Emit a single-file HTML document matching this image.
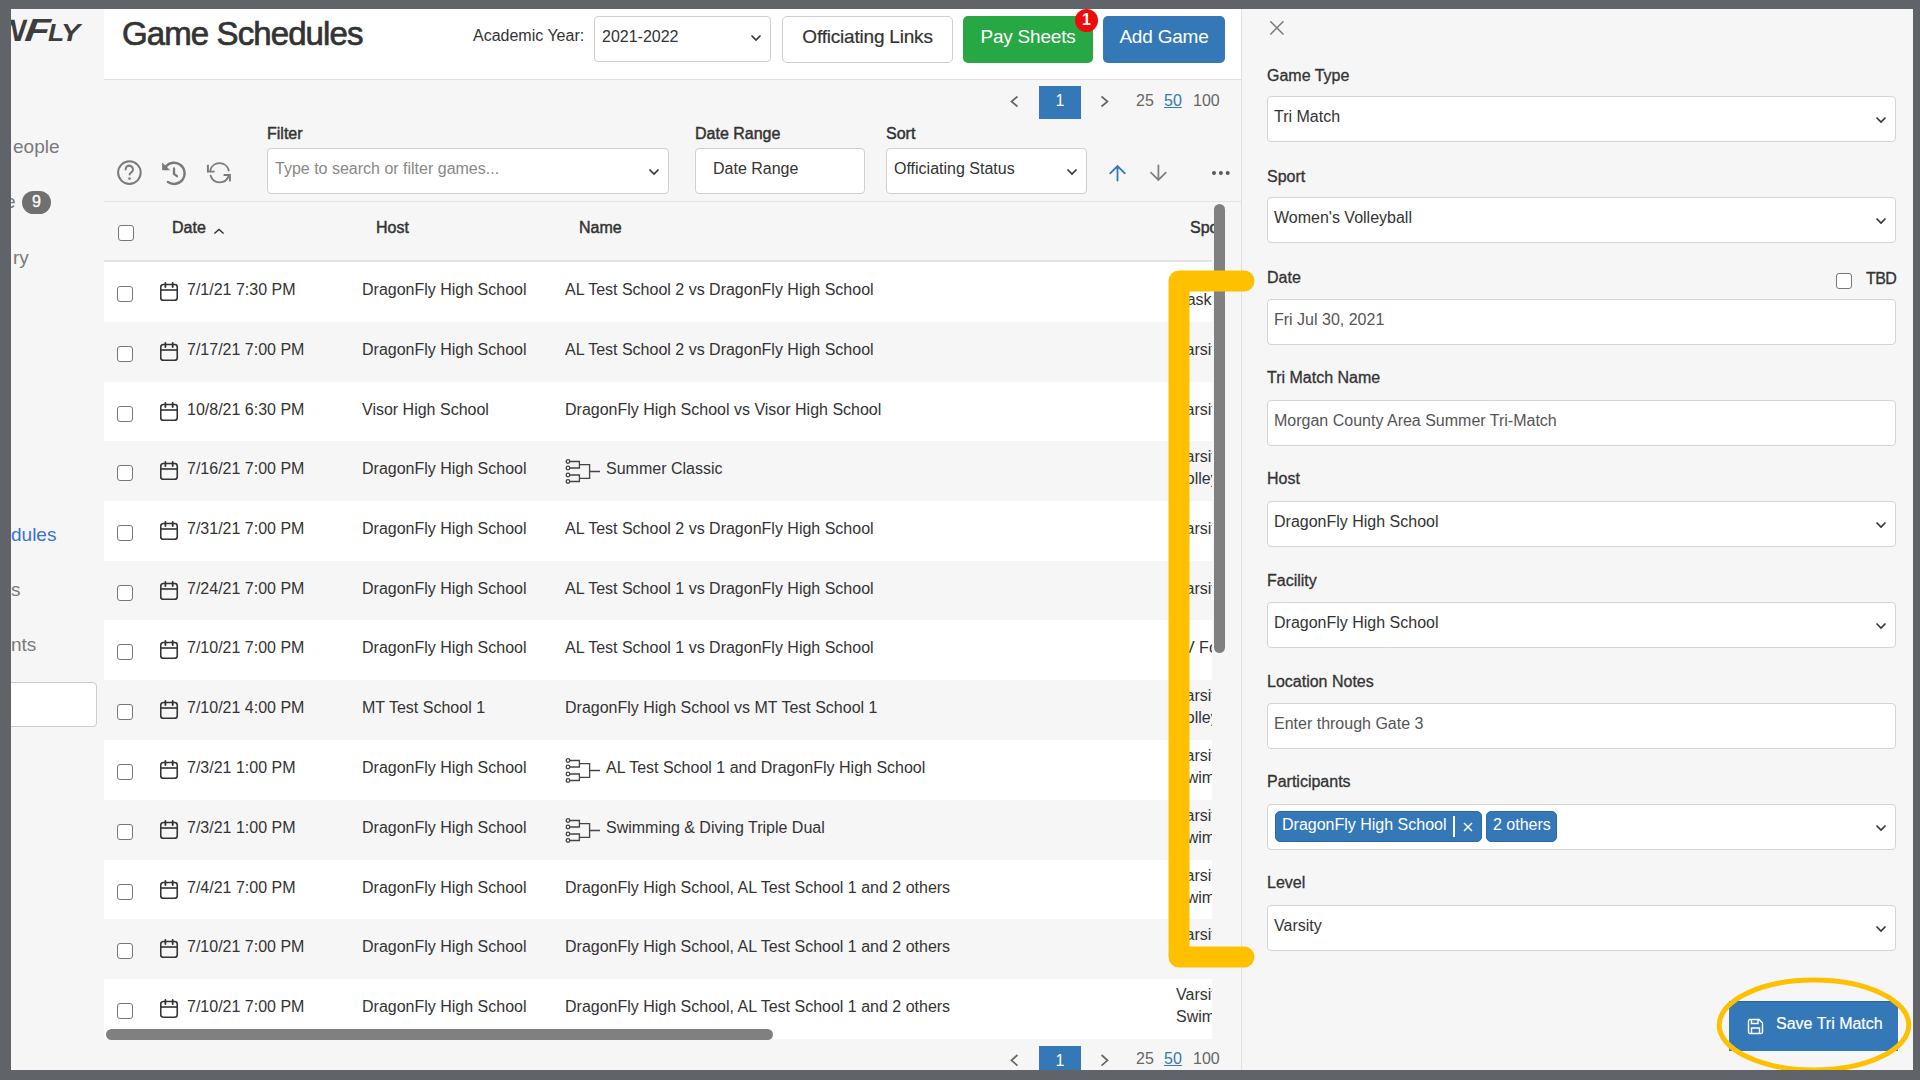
<!DOCTYPE html>
<html><head><meta charset="utf-8">
<style>
*{box-sizing:border-box;margin:0;padding:0}
html,body{width:1920px;height:1080px;overflow:hidden;background:#606469;font-family:"Liberation Sans",sans-serif;color:#333}
#app{position:absolute;left:11px;top:9px;width:1902px;height:1061px;background:#f6f6f6;overflow:hidden}
.abs{position:absolute}
.t{position:absolute;font-size:16px;line-height:20px;white-space:nowrap;color:#333}
/* sidebar */
#side{position:absolute;left:0;top:0;width:93px;height:1061px;background:#f6f6f6;overflow:hidden}
.sitem{position:absolute;font-size:19px;line-height:24px;color:#7a7a7a;white-space:nowrap}
/* header */
#hdr{position:absolute;left:93px;top:0;width:1137px;height:71px;background:#fff;border-bottom:1px solid #dedede}
#main{position:absolute;left:93px;top:71px;width:1137px;height:990px;background:#f6f6f6;overflow:hidden}
.btn{position:absolute;top:7px;height:47px;border-radius:5px;font-size:19px;letter-spacing:-0.2px;line-height:42px;text-align:center;white-space:nowrap}
.sel{position:absolute;background:#fff;border:1px solid #cfcfcf;border-radius:4px}
.flabel{position:absolute;font-size:16px;font-weight:normal;-webkit-text-stroke:0.45px #333;line-height:20px;color:#333;white-space:nowrap}
.row{position:absolute;left:0;width:1108px;overflow:hidden}
.cb{position:absolute;width:16px;height:16px;border:1.5px solid #777;border-radius:3px;background:#fff}
.sp{left:1072px}
/* right panel */
#rp{position:absolute;left:1230px;top:0;width:672px;height:1061px;background:#f6f6f6;border-left:1px solid #e0e0e0}
.lbl{position:absolute;left:25px;font-size:16px;line-height:22px;color:#333;white-space:nowrap;-webkit-text-stroke:0.3px #333}
.inp{position:absolute;left:25px;width:629px;height:46px;background:#fff;border:1px solid #d4d4d4;border-radius:4px}
.iv{position:absolute;left:6px;top:10px;font-size:16px;line-height:20px;color:#333;white-space:nowrap}
.chev{position:absolute;right:8px;top:19px;width:12px;height:8px;line-height:0}
.tag{position:absolute;top:6px;height:31px;background:#3578b8;border:1px solid #2c6aa6;border-radius:5px;color:#fff;font-size:16px;line-height:26px;padding-left:6px;white-space:nowrap;overflow:hidden}
.tag .bar{position:absolute;left:177px;top:4px;width:1.5px;height:21px;background:#fff}
.tag .x{position:absolute;left:187px;top:10px}
</style></head>
<body>
<div id="app">
  <!-- sidebar -->
  <div id="side">
    <div class="abs" style="left:0;top:0;width:93px;height:60px;overflow:hidden;font-weight:bold;font-style:italic;color:#3d3d3d;white-space:nowrap">
      <span class="abs" style="left:-8px;top:2px;font-size:31px;line-height:40px;transform:skewX(-8deg)">N</span>
      <span class="abs" style="left:17px;top:1px;font-size:32px;line-height:40px;transform:scaleX(1.25) skewX(-6deg);transform-origin:0 0">F</span>
      <span class="abs" style="left:37px;top:8px;font-size:24px;line-height:32px;transform:scaleX(1.1);transform-origin:0 0">L</span>
      <span class="abs" style="left:50px;top:8px;font-size:24px;line-height:32px;transform:scaleX(1.2);transform-origin:0 0">Y</span>
    </div>
    <div class="sitem" style="left:2px;top:126px">eople</div>
    <div class="sitem" style="left:-6px;top:181px">e</div>
    <div class="abs" style="left:11px;top:182px;width:29px;height:23px;border-radius:12px;background:#707070;color:#fff;font-size:16px;-webkit-text-stroke:0.3px #fff;line-height:21px;text-align:center">9</div>
    <div class="sitem" style="left:2px;top:237px">ry</div>
    <div class="sitem" style="left:0px;top:514px;color:#3b6fd6">dules</div>
    <div class="sitem" style="left:0px;top:569px">s</div>
    <div class="sitem" style="left:0px;top:624px">nts</div>
    <div class="abs" style="left:-10px;top:673px;width:96px;height:45px;background:#fff;border:1px solid #ccc;border-radius:4px"></div>
  </div>
  <!-- header -->
  <div id="hdr">
    <div class="abs" style="left:18px;top:5px;font-size:33px;line-height:40px;font-weight:normal;letter-spacing:-0.9px;-webkit-text-stroke:0.7px #333;color:#333;white-space:nowrap">Game Schedules</div>
    <div class="abs" style="left:369px;top:17px;font-size:16px;line-height:20px;color:#333;white-space:nowrap">Academic Year:</div>
    <div class="sel" style="left:490px;top:7px;width:177px;height:46px"><div class="t" style="left:7px;top:10px">2021-2022</div><div class="chev" style="top:17px;right:8px"><svg width="12" height="8" viewBox="0 0 12 8"><path d="M1.5 1.5 L6 6 L10.5 1.5" fill="none" stroke="#333" stroke-width="1.6"/></svg></div></div>
    <div class="btn" style="left:678px;width:171px;background:#fff;border:1px solid #cfcfcf;color:#333;line-height:40px;-webkit-text-stroke:0.2px #333">Officiating Links</div>
    <div class="btn" style="left:859px;width:130px;background:#28a745;color:#fff">Pay Sheets</div>
    <div class="abs" style="left:971px;top:0px;width:23px;height:23px;border-radius:50%;background:#f00a0a;color:#fff;font-size:16px;font-weight:bold;line-height:21px;text-align:center">1</div>
    <div class="btn" style="left:999px;width:122px;background:#3578b8;color:#fff">Add Game</div>
  </div>
  <!-- main -->
  <div id="main">
    <!-- pagination top -->
    
    <div class="abs" style="left:935px;top:6px;width:42px;height:33px;background:#3578b8;color:#fff;font-size:16px;line-height:30px;text-align:center">1</div>
    
    <div class="t" style="left:1032px;top:11px;color:#666">25</div>
    <div class="t" style="left:1060px;top:11px;color:#3578b8;text-decoration:underline">50</div>
    <div class="t" style="left:1089px;top:11px;color:#666">100</div>
    <!-- filter bar -->
    <div class="flabel" style="left:163px;top:44px">Filter</div>
    <div class="sel" style="left:163px;top:68px;width:402px;height:46px"><div class="t" style="left:7px;top:10px;color:#888">Type to search or filter games...</div><div class="chev"><svg width="12" height="8" viewBox="0 0 12 8"><path d="M1.5 1.5 L6 6 L10.5 1.5" fill="none" stroke="#333" stroke-width="1.6"/></svg></div></div>
    <div class="flabel" style="left:591px;top:44px">Date Range</div>
    <div class="sel" style="left:591px;top:68px;width:170px;height:46px"><div class="t" style="left:17px;top:10px">Date Range</div></div>
    <div class="flabel" style="left:782px;top:44px">Sort</div>
    <div class="sel" style="left:782px;top:68px;width:201px;height:46px"><div class="t" style="left:7px;top:10px">Officiating Status</div><div class="chev"><svg width="12" height="8" viewBox="0 0 12 8"><path d="M1.5 1.5 L6 6 L10.5 1.5" fill="none" stroke="#333" stroke-width="1.6"/></svg></div></div>
    <!-- separator -->
    <div class="abs" style="left:0;top:121px;width:1137px;height:1px;background:#e3e3e3"></div>
    <!-- table header -->
    <div class="cb" style="left:14px;top:145px"></div>
    <div class="flabel" style="left:68px;top:138px">Date</div>
    <svg class="abs" style="left:109px;top:147px" width="12" height="8" viewBox="0 0 12 8"><path d="M1.4 6.6 L6 2.4 L10.6 6.6" fill="none" stroke="#333" stroke-width="1.4"/></svg>
    <div class="flabel" style="left:272px;top:138px">Host</div>
    <div class="flabel" style="left:475px;top:138px">Name</div>
    <div class="flabel" style="left:1086px;top:138px">Spo</div>
    <div class="abs" style="left:0;top:180px;width:1108px;height:2px;background:#e3e3e3"></div>
  </div>
  <!-- rows are positioned relative to app -->
  <div id="rows" class="abs" style="left:93px;top:-9px;width:1108px;height:1041px;overflow:hidden">
<div class="row" style="top:262px;height:60px;background:#fff"><div class="cb" style="left:13px;top:24px"></div><div style="position:absolute;left:56px;top:20px"><svg width="19" height="20" viewBox="0 0 19 20"><rect x="0.75" y="2.55" width="16.5" height="15.75" rx="2.6" fill="none" stroke="#333" stroke-width="1.6"/><line x1="0.8" y1="8" x2="17.2" y2="8" stroke="#333" stroke-width="1.6"/><line x1="5.4" y1="0.9" x2="5.4" y2="5" stroke="#333" stroke-width="1.8" stroke-linecap="round"/><line x1="12.7" y1="0.9" x2="12.7" y2="5" stroke="#333" stroke-width="1.8" stroke-linecap="round"/></svg></div><div class="t" style="left:83px;top:18px">7/1/21 7:30 PM</div><div class="t" style="left:258px;top:18px">DragonFly High School</div><div class="t" style="left:461px;top:18px">AL Test School 2 vs DragonFly High School</div><div class="t sp" style="top:6px">Varsity</div><div class="t sp" style="top:28px">Basketball</div></div>
<div class="row" style="top:322px;height:60px;background:#f6f6f6"><div class="cb" style="left:13px;top:24px"></div><div style="position:absolute;left:56px;top:20px"><svg width="19" height="20" viewBox="0 0 19 20"><rect x="0.75" y="2.55" width="16.5" height="15.75" rx="2.6" fill="none" stroke="#333" stroke-width="1.6"/><line x1="0.8" y1="8" x2="17.2" y2="8" stroke="#333" stroke-width="1.6"/><line x1="5.4" y1="0.9" x2="5.4" y2="5" stroke="#333" stroke-width="1.8" stroke-linecap="round"/><line x1="12.7" y1="0.9" x2="12.7" y2="5" stroke="#333" stroke-width="1.8" stroke-linecap="round"/></svg></div><div class="t" style="left:83px;top:18px">7/17/21 7:00 PM</div><div class="t" style="left:258px;top:18px">DragonFly High School</div><div class="t" style="left:461px;top:18px">AL Test School 2 vs DragonFly High School</div><div class="t sp" style="top:18px">Varsity</div></div>
<div class="row" style="top:382px;height:59px;background:#fff"><div class="cb" style="left:13px;top:24px"></div><div style="position:absolute;left:56px;top:20px"><svg width="19" height="20" viewBox="0 0 19 20"><rect x="0.75" y="2.55" width="16.5" height="15.75" rx="2.6" fill="none" stroke="#333" stroke-width="1.6"/><line x1="0.8" y1="8" x2="17.2" y2="8" stroke="#333" stroke-width="1.6"/><line x1="5.4" y1="0.9" x2="5.4" y2="5" stroke="#333" stroke-width="1.8" stroke-linecap="round"/><line x1="12.7" y1="0.9" x2="12.7" y2="5" stroke="#333" stroke-width="1.8" stroke-linecap="round"/></svg></div><div class="t" style="left:83px;top:18px">10/8/21 6:30 PM</div><div class="t" style="left:258px;top:18px">Visor High School</div><div class="t" style="left:461px;top:18px">DragonFly High School vs Visor High School</div><div class="t sp" style="top:18px">Varsity</div></div>
<div class="row" style="top:441px;height:60px;background:#f6f6f6"><div class="cb" style="left:13px;top:24px"></div><div style="position:absolute;left:56px;top:20px"><svg width="19" height="20" viewBox="0 0 19 20"><rect x="0.75" y="2.55" width="16.5" height="15.75" rx="2.6" fill="none" stroke="#333" stroke-width="1.6"/><line x1="0.8" y1="8" x2="17.2" y2="8" stroke="#333" stroke-width="1.6"/><line x1="5.4" y1="0.9" x2="5.4" y2="5" stroke="#333" stroke-width="1.8" stroke-linecap="round"/><line x1="12.7" y1="0.9" x2="12.7" y2="5" stroke="#333" stroke-width="1.8" stroke-linecap="round"/></svg></div><div class="t" style="left:83px;top:18px">7/16/21 7:00 PM</div><div class="t" style="left:258px;top:18px">DragonFly High School</div><div style="position:absolute;left:461px;top:18px"><svg width="36" height="26" viewBox="0 0 36 26"><g fill="none" stroke="#444" stroke-width="1.3"><circle cx="3" cy="2.5" r="1.8"/><circle cx="3" cy="9" r="1.8"/><circle cx="3" cy="16" r="1.8"/><circle cx="3" cy="22.5" r="1.8"/><path d="M5 2.5 H14.4 V9 H5 M14.4 5.7 H24.6 V19.3 H14.4 M5 16 H14.4 V22.5 H5 M24.6 12.5 H35"/></g></svg></div><div class="t" style="left:502px;top:18px">Summer Classic</div><div class="t sp" style="top:6px">Varsity</div><div class="t sp" style="top:28px">Volleyball</div></div>
<div class="row" style="top:501px;height:60px;background:#fff"><div class="cb" style="left:13px;top:24px"></div><div style="position:absolute;left:56px;top:20px"><svg width="19" height="20" viewBox="0 0 19 20"><rect x="0.75" y="2.55" width="16.5" height="15.75" rx="2.6" fill="none" stroke="#333" stroke-width="1.6"/><line x1="0.8" y1="8" x2="17.2" y2="8" stroke="#333" stroke-width="1.6"/><line x1="5.4" y1="0.9" x2="5.4" y2="5" stroke="#333" stroke-width="1.8" stroke-linecap="round"/><line x1="12.7" y1="0.9" x2="12.7" y2="5" stroke="#333" stroke-width="1.8" stroke-linecap="round"/></svg></div><div class="t" style="left:83px;top:18px">7/31/21 7:00 PM</div><div class="t" style="left:258px;top:18px">DragonFly High School</div><div class="t" style="left:461px;top:18px">AL Test School 2 vs DragonFly High School</div><div class="t sp" style="top:18px">Varsity</div></div>
<div class="row" style="top:561px;height:59px;background:#f6f6f6"><div class="cb" style="left:13px;top:24px"></div><div style="position:absolute;left:56px;top:20px"><svg width="19" height="20" viewBox="0 0 19 20"><rect x="0.75" y="2.55" width="16.5" height="15.75" rx="2.6" fill="none" stroke="#333" stroke-width="1.6"/><line x1="0.8" y1="8" x2="17.2" y2="8" stroke="#333" stroke-width="1.6"/><line x1="5.4" y1="0.9" x2="5.4" y2="5" stroke="#333" stroke-width="1.8" stroke-linecap="round"/><line x1="12.7" y1="0.9" x2="12.7" y2="5" stroke="#333" stroke-width="1.8" stroke-linecap="round"/></svg></div><div class="t" style="left:83px;top:18px">7/24/21 7:00 PM</div><div class="t" style="left:258px;top:18px">DragonFly High School</div><div class="t" style="left:461px;top:18px">AL Test School 1 vs DragonFly High School</div><div class="t sp" style="top:18px">Varsity</div></div>
<div class="row" style="top:620px;height:60px;background:#fff"><div class="cb" style="left:13px;top:24px"></div><div style="position:absolute;left:56px;top:20px"><svg width="19" height="20" viewBox="0 0 19 20"><rect x="0.75" y="2.55" width="16.5" height="15.75" rx="2.6" fill="none" stroke="#333" stroke-width="1.6"/><line x1="0.8" y1="8" x2="17.2" y2="8" stroke="#333" stroke-width="1.6"/><line x1="5.4" y1="0.9" x2="5.4" y2="5" stroke="#333" stroke-width="1.8" stroke-linecap="round"/><line x1="12.7" y1="0.9" x2="12.7" y2="5" stroke="#333" stroke-width="1.8" stroke-linecap="round"/></svg></div><div class="t" style="left:83px;top:18px">7/10/21 7:00 PM</div><div class="t" style="left:258px;top:18px">DragonFly High School</div><div class="t" style="left:461px;top:18px">AL Test School 1 vs DragonFly High School</div><div class="t sp" style="top:18px">JV Football</div></div>
<div class="row" style="top:680px;height:60px;background:#f6f6f6"><div class="cb" style="left:13px;top:24px"></div><div style="position:absolute;left:56px;top:20px"><svg width="19" height="20" viewBox="0 0 19 20"><rect x="0.75" y="2.55" width="16.5" height="15.75" rx="2.6" fill="none" stroke="#333" stroke-width="1.6"/><line x1="0.8" y1="8" x2="17.2" y2="8" stroke="#333" stroke-width="1.6"/><line x1="5.4" y1="0.9" x2="5.4" y2="5" stroke="#333" stroke-width="1.8" stroke-linecap="round"/><line x1="12.7" y1="0.9" x2="12.7" y2="5" stroke="#333" stroke-width="1.8" stroke-linecap="round"/></svg></div><div class="t" style="left:83px;top:18px">7/10/21 4:00 PM</div><div class="t" style="left:258px;top:18px">MT Test School 1</div><div class="t" style="left:461px;top:18px">DragonFly High School vs MT Test School 1</div><div class="t sp" style="top:6px">Varsity</div><div class="t sp" style="top:28px">Volleyball</div></div>
<div class="row" style="top:740px;height:60px;background:#fff"><div class="cb" style="left:13px;top:24px"></div><div style="position:absolute;left:56px;top:20px"><svg width="19" height="20" viewBox="0 0 19 20"><rect x="0.75" y="2.55" width="16.5" height="15.75" rx="2.6" fill="none" stroke="#333" stroke-width="1.6"/><line x1="0.8" y1="8" x2="17.2" y2="8" stroke="#333" stroke-width="1.6"/><line x1="5.4" y1="0.9" x2="5.4" y2="5" stroke="#333" stroke-width="1.8" stroke-linecap="round"/><line x1="12.7" y1="0.9" x2="12.7" y2="5" stroke="#333" stroke-width="1.8" stroke-linecap="round"/></svg></div><div class="t" style="left:83px;top:18px">7/3/21 1:00 PM</div><div class="t" style="left:258px;top:18px">DragonFly High School</div><div style="position:absolute;left:461px;top:18px"><svg width="36" height="26" viewBox="0 0 36 26"><g fill="none" stroke="#444" stroke-width="1.3"><circle cx="3" cy="2.5" r="1.8"/><circle cx="3" cy="9" r="1.8"/><circle cx="3" cy="16" r="1.8"/><circle cx="3" cy="22.5" r="1.8"/><path d="M5 2.5 H14.4 V9 H5 M14.4 5.7 H24.6 V19.3 H14.4 M5 16 H14.4 V22.5 H5 M24.6 12.5 H35"/></g></svg></div><div class="t" style="left:502px;top:18px">AL Test School 1 and DragonFly High School</div><div class="t sp" style="top:6px">Varsity</div><div class="t sp" style="top:28px">Swimming</div></div>
<div class="row" style="top:800px;height:60px;background:#f6f6f6"><div class="cb" style="left:13px;top:24px"></div><div style="position:absolute;left:56px;top:20px"><svg width="19" height="20" viewBox="0 0 19 20"><rect x="0.75" y="2.55" width="16.5" height="15.75" rx="2.6" fill="none" stroke="#333" stroke-width="1.6"/><line x1="0.8" y1="8" x2="17.2" y2="8" stroke="#333" stroke-width="1.6"/><line x1="5.4" y1="0.9" x2="5.4" y2="5" stroke="#333" stroke-width="1.8" stroke-linecap="round"/><line x1="12.7" y1="0.9" x2="12.7" y2="5" stroke="#333" stroke-width="1.8" stroke-linecap="round"/></svg></div><div class="t" style="left:83px;top:18px">7/3/21 1:00 PM</div><div class="t" style="left:258px;top:18px">DragonFly High School</div><div style="position:absolute;left:461px;top:18px"><svg width="36" height="26" viewBox="0 0 36 26"><g fill="none" stroke="#444" stroke-width="1.3"><circle cx="3" cy="2.5" r="1.8"/><circle cx="3" cy="9" r="1.8"/><circle cx="3" cy="16" r="1.8"/><circle cx="3" cy="22.5" r="1.8"/><path d="M5 2.5 H14.4 V9 H5 M14.4 5.7 H24.6 V19.3 H14.4 M5 16 H14.4 V22.5 H5 M24.6 12.5 H35"/></g></svg></div><div class="t" style="left:502px;top:18px">Swimming &amp; Diving Triple Dual</div><div class="t sp" style="top:6px">Varsity</div><div class="t sp" style="top:28px">Swimming</div></div>
<div class="row" style="top:860px;height:59px;background:#fff"><div class="cb" style="left:13px;top:24px"></div><div style="position:absolute;left:56px;top:20px"><svg width="19" height="20" viewBox="0 0 19 20"><rect x="0.75" y="2.55" width="16.5" height="15.75" rx="2.6" fill="none" stroke="#333" stroke-width="1.6"/><line x1="0.8" y1="8" x2="17.2" y2="8" stroke="#333" stroke-width="1.6"/><line x1="5.4" y1="0.9" x2="5.4" y2="5" stroke="#333" stroke-width="1.8" stroke-linecap="round"/><line x1="12.7" y1="0.9" x2="12.7" y2="5" stroke="#333" stroke-width="1.8" stroke-linecap="round"/></svg></div><div class="t" style="left:83px;top:18px">7/4/21 7:00 PM</div><div class="t" style="left:258px;top:18px">DragonFly High School</div><div class="t" style="left:461px;top:18px">DragonFly High School, AL Test School 1 and 2 others</div><div class="t sp" style="top:6px">Varsity</div><div class="t sp" style="top:28px">Swimming</div></div>
<div class="row" style="top:919px;height:60px;background:#f6f6f6"><div class="cb" style="left:13px;top:24px"></div><div style="position:absolute;left:56px;top:20px"><svg width="19" height="20" viewBox="0 0 19 20"><rect x="0.75" y="2.55" width="16.5" height="15.75" rx="2.6" fill="none" stroke="#333" stroke-width="1.6"/><line x1="0.8" y1="8" x2="17.2" y2="8" stroke="#333" stroke-width="1.6"/><line x1="5.4" y1="0.9" x2="5.4" y2="5" stroke="#333" stroke-width="1.8" stroke-linecap="round"/><line x1="12.7" y1="0.9" x2="12.7" y2="5" stroke="#333" stroke-width="1.8" stroke-linecap="round"/></svg></div><div class="t" style="left:83px;top:18px">7/10/21 7:00 PM</div><div class="t" style="left:258px;top:18px">DragonFly High School</div><div class="t" style="left:461px;top:18px">DragonFly High School, AL Test School 1 and 2 others</div><div class="t sp" style="top:6px">Varsity</div><div class="t sp" style="top:28px">Swimming</div></div>
<div class="row" style="top:979px;height:60px;background:#fff"><div class="cb" style="left:13px;top:24px"></div><div style="position:absolute;left:56px;top:20px"><svg width="19" height="20" viewBox="0 0 19 20"><rect x="0.75" y="2.55" width="16.5" height="15.75" rx="2.6" fill="none" stroke="#333" stroke-width="1.6"/><line x1="0.8" y1="8" x2="17.2" y2="8" stroke="#333" stroke-width="1.6"/><line x1="5.4" y1="0.9" x2="5.4" y2="5" stroke="#333" stroke-width="1.8" stroke-linecap="round"/><line x1="12.7" y1="0.9" x2="12.7" y2="5" stroke="#333" stroke-width="1.8" stroke-linecap="round"/></svg></div><div class="t" style="left:83px;top:18px">7/10/21 7:00 PM</div><div class="t" style="left:258px;top:18px">DragonFly High School</div><div class="t" style="left:461px;top:18px">DragonFly High School, AL Test School 1 and 2 others</div><div class="t sp" style="top:6px">Varsity</div><div class="t sp" style="top:28px">Swimming</div></div>
  </div>
  <!-- scrollbars -->
  <div class="abs" style="left:1203px;top:195px;width:11px;height:449px;border-radius:6px;background:#808080"></div>
  <div class="abs" style="left:95px;top:1020px;width:667px;height:11px;border-radius:6px;background:#808080"></div>
  <!-- pagination bottom -->
  
  <div class="abs" style="left:1028px;top:1037px;width:42px;height:33px;background:#3578b8;color:#fff;font-size:16px;line-height:30px;text-align:center">1</div>
  
  <div class="t" style="left:1125px;top:1040px;color:#666">25</div>
  <div class="t" style="left:1153px;top:1040px;color:#3578b8;text-decoration:underline">50</div>
  <div class="t" style="left:1182px;top:1040px;color:#666">100</div>

  <!-- right panel -->
  <div id="rp">
    <svg class="abs" style="left:28px;top:12px" width="14" height="14" viewBox="0 0 14 14"><path d="M0.8 0.8 L13 13 M13 0.8 L0.8 13" stroke="#7d7d7d" stroke-width="1.6" stroke-linecap="round"/></svg>
<div class="lbl" style="top:56px">Game Type</div><div class="inp" style="top:87px"><div class="iv" style="color:#333">Tri Match</div><div class="chev"><svg width="12" height="8" viewBox="0 0 12 8"><path d="M1.5 1.5 L6 6 L10.5 1.5" fill="none" stroke="#333" stroke-width="1.6"/></svg></div></div>
<div class="lbl" style="top:157px">Sport</div><div class="inp" style="top:188px"><div class="iv" style="color:#333">Women's Volleyball</div><div class="chev"><svg width="12" height="8" viewBox="0 0 12 8"><path d="M1.5 1.5 L6 6 L10.5 1.5" fill="none" stroke="#333" stroke-width="1.6"/></svg></div></div>
<div class="lbl" style="top:258px">Date</div><div class="inp" style="top:290px"><div class="iv" style="color:#555">Fri Jul 30, 2021</div></div>
<div class="lbl" style="top:358px">Tri Match Name</div><div class="inp" style="top:391px"><div class="iv" style="color:#555">Morgan County Area Summer Tri-Match</div></div>
<div class="lbl" style="top:459px">Host</div><div class="inp" style="top:492px"><div class="iv" style="color:#333">DragonFly High School</div><div class="chev"><svg width="12" height="8" viewBox="0 0 12 8"><path d="M1.5 1.5 L6 6 L10.5 1.5" fill="none" stroke="#333" stroke-width="1.6"/></svg></div></div>
<div class="lbl" style="top:561px">Facility</div><div class="inp" style="top:593px"><div class="iv" style="color:#333">DragonFly High School</div><div class="chev"><svg width="12" height="8" viewBox="0 0 12 8"><path d="M1.5 1.5 L6 6 L10.5 1.5" fill="none" stroke="#333" stroke-width="1.6"/></svg></div></div>
<div class="lbl" style="top:662px">Location Notes</div><div class="inp" style="top:694px"><div class="iv" style="color:#555">Enter through Gate 3</div></div>
<div class="lbl" style="top:762px">Participants</div><div class="inp" style="top:795px"><div class="tag" style="left:7px;width:207px">DragonFly High School<span class="bar"></span><svg class="x" width="10" height="10" viewBox="0 0 10 10"><path d="M1 1 L9 9 M9 1 L1 9" stroke="#fff" stroke-width="1.5"/></svg></div><div class="tag" style="left:218px;width:71px">2 others</div><div class="chev"><svg width="12" height="8" viewBox="0 0 12 8"><path d="M1.5 1.5 L6 6 L10.5 1.5" fill="none" stroke="#333" stroke-width="1.6"/></svg></div></div>
<div class="lbl" style="top:863px">Level</div><div class="inp" style="top:896px"><div class="iv" style="color:#333">Varsity</div><div class="chev"><svg width="12" height="8" viewBox="0 0 12 8"><path d="M1.5 1.5 L6 6 L10.5 1.5" fill="none" stroke="#333" stroke-width="1.6"/></svg></div></div>
    <div class="cb" style="left:594px;top:264px"></div>
    <div class="abs" style="left:624px;top:259px;font-size:16px;line-height:22px;color:#333;letter-spacing:-0.6px;-webkit-text-stroke:0.3px #333">TBD</div>
    <div class="abs" style="left:487px;top:992px;width:169px;height:50px;background:#3578b8;border-top:1px solid #2a64a0;color:#fff;font-size:17px;line-height:48px;white-space:nowrap">
      <svg class="abs" style="left:18px;top:16px" width="17" height="17" viewBox="0 0 17 17" style="overflow:visible"><path d="M2 1.5 H12 L15.5 5 V14 a1.5 1.5 0 0 1 -1.5 1.5 H3 a1.5 1.5 0 0 1 -1.5 -1.5 V3 a1.5 1.5 0 0 1 1.5 -1.5 Z" fill="none" stroke="#fff" stroke-width="1.4"/><path d="M4.5 1.5 V5.5 H11 V1.5 M4.5 15.5 V10 H12.5 V15.5" fill="none" stroke="#fff" stroke-width="1.4"/></svg>
      <span class="abs" style="left:47px;top:-2px;font-size:16px;-webkit-text-stroke:0.2px #fff">Save Tri Match</span>
    </div>
  </div>

  <!-- annotations -->
  <svg class="abs" style="left:0;top:0" width="1902" height="1061" viewBox="0 0 1902 1061">
    <path d="M1233 272 H1168 V948 H1233" fill="none" stroke="#ffc000" stroke-width="21" stroke-linecap="round" stroke-linejoin="round"/>
    <ellipse cx="1803" cy="1016" rx="94.8" ry="45" fill="none" stroke="#ffc000" stroke-width="5"/>
  </svg>
</div>

<svg style="position:absolute;left:0;top:0" width="1920" height="1080" viewBox="0 0 1920 1080">
  <g fill="none" stroke="#7a7a7a" stroke-linecap="round">
    <circle cx="129.4" cy="172.6" r="11.3" stroke-width="2"/>
    <path d="M125.6 169.4 a3.7 3.7 0 1 1 5.8 3 c-1.2 0.7 -1.8 1.1 -1.8 2.1" stroke-width="2"/>
    <path d="M165.9 166.5 A10.6 10.6 0 1 1 167.9 182" stroke-width="2.4"/>
    <path d="M174 168.3 V173.9 L177 176.2" stroke-width="2.3"/>
    <path d="M210.3 170.3 A9.5 9.5 0 0 1 228.7 170.3" stroke-width="1.9"/>
    <path d="M207.9 164.8 V171.6 H214.6" stroke-width="1.9" stroke-linecap="butt"/>
    <path d="M210.6 175.6 A9.5 9.5 0 0 0 228.6 176.2" stroke-width="1.9"/>
    <path d="M223.6 175 H229.9 V181.5" stroke-width="1.9" stroke-linecap="butt"/>
    <path d="M1117.5 180.5 V166 M1110.2 173.4 L1117.5 166 L1124.8 173.4" stroke="#3578b8" stroke-width="1.8"/>
    <path d="M1158.4 165.5 V180 M1151 172.7 L1158.4 180 L1165.8 172.7" stroke="#808080" stroke-width="1.8"/>
    <path d="M1017.5 96.5 L1011.5 101.5 L1017.5 106.5 M1101.5 96.5 L1107.5 101.5 L1101.5 106.5 M1017.5 1055 L1011.5 1060.3 L1017.5 1065.6 M1101.5 1055 L1107.5 1060.3 L1101.5 1065.6" stroke="#666" stroke-width="1.7" stroke-linecap="butt"/>
  </g>
  <circle cx="129.5" cy="178.6" r="1.3" fill="#7a7a7a"/>
  <path d="M162.1 162.5 V170.3 H170.3 Z" fill="#7a7a7a"/>
  <circle cx="1214" cy="173" r="2" fill="#555a5f"/><circle cx="1220.9" cy="173" r="2" fill="#555a5f"/><circle cx="1227.7" cy="173" r="2" fill="#555a5f"/>
</svg>
</body></html>
